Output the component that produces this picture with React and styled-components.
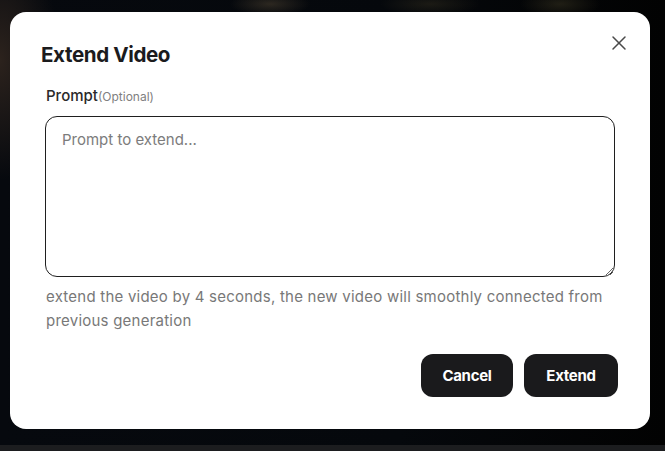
import React from 'react'
import styled, { createGlobalStyle } from 'styled-components'
import { X } from 'lucide-react'

const Global = createGlobalStyle`
  html, body { margin: 0; padding: 0; background: #040608; }
  * { box-sizing: border-box; }
  body { font-family: Inter, "Noto Sans", sans-serif; }
`;

const Page = styled.div`
  width: 665px;
  height: 451px;
  display: flex;
  flex-direction: column;
  overflow: hidden;
  background:
    radial-gradient(ellipse 60px 120px at 0px 60px, rgba(60, 45, 35, 0.7), transparent),
    radial-gradient(ellipse 40px 12px at 270px 4px, rgba(70, 60, 45, 0.6), transparent),
    radial-gradient(ellipse 50px 12px at 430px 4px, rgba(50, 45, 30, 0.5), transparent),
    radial-gradient(ellipse 40px 14px at 560px 4px, rgba(60, 55, 35, 0.5), transparent),
    linear-gradient(90deg, #06090e 0%, #05080c 60%, #020202 100%);
`;

const Backdrop = styled.div`
  flex: 1;
  padding: 12px 0 0 10px;
`;

const Strip = styled.div`
  height: 6px;
  background: #1c1d1f;
`;

const Dialog = styled.div`
  width: 640px;
  height: 417px;
  background: #fff;
  border-radius: 16px;
  padding: 30px 32px 32px 31px;
  display: flex;
  flex-direction: column;
`;

const Header = styled.div`
  display: flex;
  justify-content: space-between;
  align-items: flex-start;
`;

const Title = styled.h2`
  margin: 0;
  font-size: 20.6px;
  line-height: 26px;
  font-weight: 700;
  letter-spacing: -0.4px;
  color: #1b1b1d;
`;

const Close = styled.button`
  border: none;
  background: none;
  padding: 0;
  margin: -11px -13px 0 0;
  width: 24px;
  height: 24px;
  color: #4a4a4a;
  cursor: pointer;
  display: flex;
`;

const Body = styled.div`
  padding: 0 3px 0 4px;
  margin-top: 18px;
  display: flex;
  flex-direction: column;
`;

const Label = styled.label`
  font-size: 15px;
  line-height: 20px;
  font-weight: 500;
  color: #2a2a2a;
  display: flex;
  align-items: baseline;
  padding-left: 1px;
`;

const Optional = styled.span`
  font-size: 12px;
  font-weight: 400;
  color: #808080;
`;

const Input = styled.textarea`
  margin-top: 9px;
  height: 161px;
  width: 100%;
  border: 1px solid #1f1f1f;
  border-radius: 12px;
  padding: 13px 16px;
  font-family: inherit;
  font-size: 15px;
  line-height: 20px;
  color: #222;
  caret-color: #222;
  outline: none;
  &::placeholder { color: #7c7c7c; }
`;

const Hint = styled.p`
  margin: 8px 0 0;
  padding-left: 1px;
  font-size: 15px;
  line-height: 24px;
  color: #787878;
  letter-spacing: 0.23px;
`;

const Actions = styled.div`
  margin-top: auto;
  display: flex;
  justify-content: flex-end;
  gap: 11px;
`;

const Button = styled.button`
  height: 43px;
  padding: 0 ${p => p.$wide ? 22 : 21}px;
  min-width: ${p => p.$wide ? 94 : 92}px;
  border: none;
  border-radius: 12px;
  background: #1a1a1c;
  color: #fff;
  font-family: inherit;
  font-size: 15px;
  font-weight: 700;
  letter-spacing: -0.3px;
  cursor: pointer;
`;

export default function App() {
  return (
    <Page>
      <Global />
      <Backdrop>
        <Dialog>
          <Header>
            <Title>Extend Video</Title>
            <Close aria-label="Close"><X size={24} strokeWidth={1.5} /></Close>
          </Header>
          <Body>
            <Label>Prompt<Optional>(Optional)</Optional></Label>
            <Input placeholder="Prompt to extend..." autoFocus />
            <Hint>extend the video by 4 seconds, the new video will smoothly connected from previous generation</Hint>
          </Body>
          <Actions>
            <Button>Cancel</Button>
            <Button $wide>Extend</Button>
          </Actions>
        </Dialog>
      </Backdrop>
      <Strip />
    </Page>
  )
}
